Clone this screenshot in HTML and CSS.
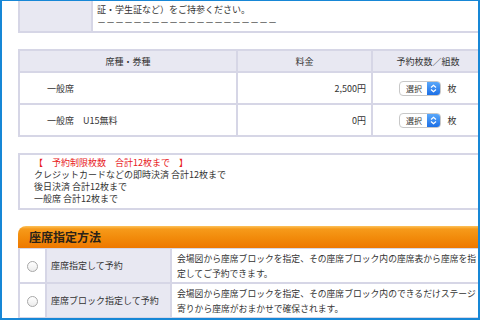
FILE: index.html
```html
<!DOCTYPE html>
<html lang="ja">
<head>
  <meta charset="UTF-8">
  <meta name="viewport" content="width=device-width, initial-scale=1.0">
  <title>チケット予約</title>
  <link rel="stylesheet" href="styles.css">
</head>
<body>
  <div class="frame">
    <table class="info">
      <tr>
        <th class="info-head"></th>
        <td class="info-body">証・学生証など）をご持参ください。<br>－－－－－－－－－－－－－－－－－－－－</td>
      </tr>
    </table>

    <table class="seats">
      <tr>
        <th class="col-type">席種・券種</th>
        <th class="col-price">料金</th>
        <th class="col-count">予約枚数／組数</th>
      </tr>
      <tr>
        <td class="type">一般席</td>
        <td class="price">2,500円</td>
        <td class="count">
          <span class="select"><span class="select-label">選択</span><span class="select-arrow"><svg width="7" height="9" viewBox="0 0 7 9"><path d="M1 3.5 L3.5 1.2 L6 3.5 M1 5.5 L3.5 7.8 L6 5.5" fill="none" stroke="#fff" stroke-width="1.2"/></svg></span></span>
          <span class="unit">枚</span>
        </td>
      </tr>
      <tr>
        <td class="type">一般席　U15無料</td>
        <td class="price">0円</td>
        <td class="count">
          <span class="select"><span class="select-label">選択</span><span class="select-arrow"><svg width="7" height="9" viewBox="0 0 7 9"><path d="M1 3.5 L3.5 1.2 L6 3.5 M1 5.5 L3.5 7.8 L6 5.5" fill="none" stroke="#fff" stroke-width="1.2"/></svg></span></span>
          <span class="unit">枚</span>
        </td>
      </tr>
    </table>

    <div class="notice">
      <p class="notice-title">【　予約制限枚数　合計12枚まで　】</p>
      <p>クレジットカードなどの即時決済 合計12枚まで</p>
      <p>後日決済 合計12枚まで</p>
      <p>一般席 合計12枚まで</p>
    </div>

    <div class="section">
      <h2 class="section-title">座席指定方法</h2>
      <table class="methods">
        <tr>
          <td class="radio-cell"><span class="radio"></span></td>
          <td class="method-name">座席指定して予約</td>
          <td class="method-desc">会場図から座席ブロックを指定、その座席ブロック内の座席表から座席を指定してご予約できます。</td>
        </tr>
        <tr>
          <td class="radio-cell"><span class="radio"></span></td>
          <td class="method-name">座席ブロック指定して予約</td>
          <td class="method-desc">会場図から座席ブロックを指定、その座席ブロック内のできるだけステージ寄りから座席がおまかせで確保されます。</td>
        </tr>
      </table>
    </div>
  </div>
</body>
</html>
```

FILE: styles.css
```css
body { margin: 0; font-family: "Noto Sans CJK JP", sans-serif; font-size: 9px; color: #333; background: #fff; }
.frame { width: 480px; height: 320px; box-sizing: border-box; border: 2px solid #1787d6; border-top-width: 1px; padding-left: 16px; overflow: hidden; }

table { border-collapse: separate; border-spacing: 0; table-layout: fixed; width: 467px; }
th, td { box-sizing: border-box; padding: 0; border-right: 2px solid #d6d6e6; border-bottom: 2px solid #d6d6e6; }

.info { border-left: 2px solid #d6d6e6; }
.info-head { width: 73px; background: #e8e8f2; }
.info-body { padding: 2px 4px; line-height: 13px; white-space: nowrap; }

.seats { margin-top: 16px; border-left: 2px solid #d6d6e6; border-top: 2px solid #d6d6e6; }
.seats th { height: 22px; font-weight: normal; background: #e8e8f2; text-align: center; }
.col-type { width: 218px; }
.col-price { width: 135px; }
.seats td { height: 32px; }
.type { padding-left: 27px; }
.price { text-align: right; padding-right: 5px; }
.count { text-align: center; padding-right: 0; }

.select { display: inline-flex; vertical-align: middle; height: 15px; box-sizing: border-box; border: 1px solid #c8c8c8; border-radius: 4px; background: #fff; overflow: hidden; }
.select-label { width: 27px; font-size: 8px; line-height: 13px; text-align: center; }
.select-arrow { width: 13px; display: flex; align-items: center; justify-content: center; background: linear-gradient(#5aa8fa, #1c6fe6); }
.unit { margin-left: 4px; vertical-align: middle; }

.notice { margin-top: 16px; width: 467px; box-sizing: border-box; border: 2px solid #d6d6e6; padding: 2px 14px 3px; line-height: 12px; }
.notice p { margin: 0; }
.notice-title { color: #e8201c; }

.section { margin-top: 16px; }
.section-title { margin: 0; width: 467px; height: 22px; padding-left: 11px; box-sizing: border-box; border-radius: 8px 0 0 0; font-size: 12px; line-height: 22px; font-weight: bold; color: #2a2218; background: linear-gradient(#fdc25a 0, #f69a1a 3px, #f28c0c 50%, #ee7800 100%); }

.methods { border-left: 2px solid #d6d6e6; border-top: 1px solid #d6d6e6; }
.radio-cell { width: 27px; text-align: center; }
.radio { display: inline-block; width: 11px; height: 11px; box-sizing: border-box; border: 1px solid #a8a8a8; border-radius: 50%; background: linear-gradient(#fff, #ececec); vertical-align: middle; }
.method-name { width: 125px; padding-left: 4px; background: #e8e8f2; }
.method-desc { padding: 2px 5px 1px; font-size: 8.8px; line-height: 15px; }
```
